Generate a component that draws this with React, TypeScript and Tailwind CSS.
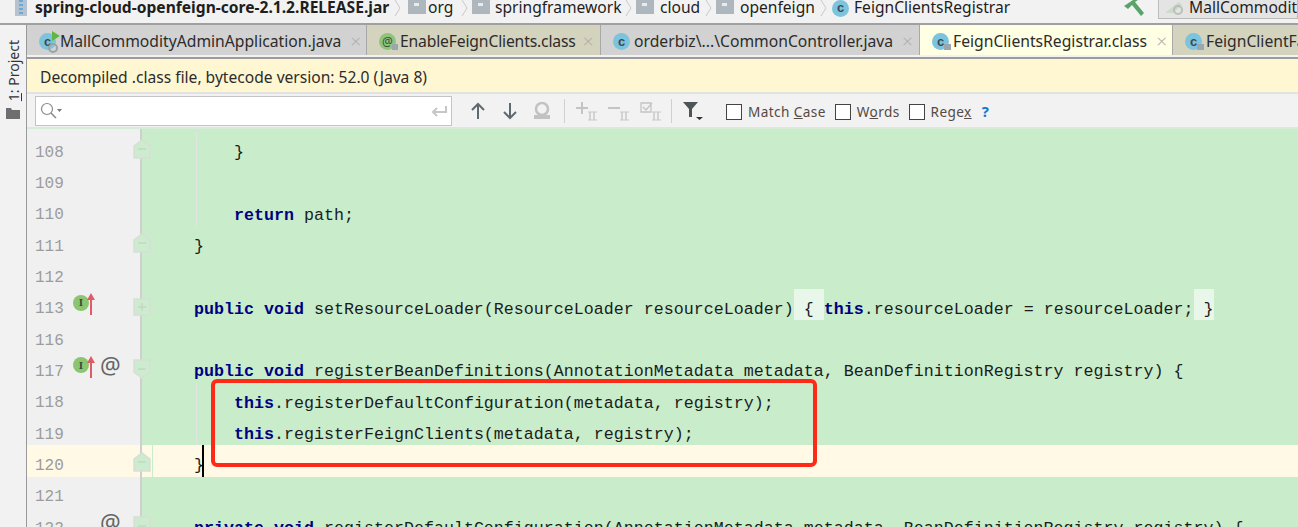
import type { ReactNode } from "react";

const UI = "font-['Noto_Sans','Open_Sans',sans-serif]";

function Chevron() {
  return (
    <svg width="7" height="18" viewBox="0 0 7 18" className="shrink-0">
      <path d="M1 1l5 8-5 8" fill="none" stroke="#c8c8c8" strokeWidth="1" />
    </svg>
  );
}

function FolderIcon() {
  return (
    <svg width="18" height="14" viewBox="0 0 18 14" className="shrink-0 -mt-[3px]">
      <path d="M0 0h18v14H0z" fill="#aeb7bd" />
      <path d="M6 3h5v3H6z" fill="#e8eaec" />
    </svg>
  );
}

function ClassIcon({ lock, run }: { lock?: boolean; run?: boolean }) {
  return (
    <span className="relative inline-flex w-[17px] h-[17px] shrink-0 items-center justify-center rounded-full bg-[#7cc4de]">
      <span className="text-[13px] leading-none font-bold text-[#3a4a52] font-['Liberation_Sans',sans-serif] -mt-[1px]">c</span>
      {lock && <span className="absolute -right-[2px] bottom-0 w-[7px] h-[6px] bg-[#9aa7ae]" />}
      {run && (
        <svg width="24" height="24" viewBox="0 0 24 24" className="absolute left-0 top-[-3px]">
          <path d="M13 1l8 5-8 5z" fill="#62b543" />
          <circle cx="14" cy="18" r="4" fill="none" stroke="#9aa2a8" strokeWidth="2" />
        </svg>
      )}
    </span>
  );
}

function AtIcon() {
  return (
    <span className="relative inline-flex w-[17px] h-[17px] shrink-0 items-center justify-center rounded-full bg-[#8fc47d] text-[12px] leading-none text-[#33503a]">
      @
      <span className="absolute -right-[2px] bottom-0 w-[6px] h-[6px] bg-[#9aa7ae]" />
    </span>
  );
}

function Tab({ icon, label, width, bg, tight, x = true }: { icon: ReactNode; label: string; width: string; bg: string; tight?: boolean; x?: boolean }) {
  return (
    <div className={`${width} ${bg} h-[30px] pt-[3px] shrink-0 flex items-center gap-[4px] pl-[12px] border-r border-[#a8a8a8] overflow-hidden`}>
      {icon}
      <span className={`text-[15.7px] leading-none text-[#2c2c2c] whitespace-nowrap ${tight ? "tracking-[-0.16px]" : ""}`}>{label}</span>
      {x && <span className={`${tight ? "ml-[3px]" : "ml-[5px]"} text-[#b0b0b0] text-[19px] leading-none font-light`}>×</span>}
    </div>
  );
}

function Check({ label }: { label: ReactNode }) {
  return (
    <div className="flex items-center gap-[6px] shrink-0">
      <span className="w-[16px] h-[16px] bg-white border border-[#444]" />
      <span className="text-[13.6px] tracking-[0.4px] text-[#554a44] leading-none">{label}</span>
    </div>
  );
}

function Fold({ kind }: { kind: "up" | "down" | "plus" }) {
  const shape =
    kind === "up"
      ? "M1 7L9 1l8 6v12H1z"
      : kind === "down"
        ? "M1 1h16v12l-8 6-8-6z"
        : "M1 2h16v16H1z";
  return (
    <svg width="18" height="20" viewBox="0 0 18 20" className={`absolute z-10 left-[106px] ${kind === "up" ? "top-[7px]" : "top-[8px]"}`}>
      <path d={shape} fill="#cdebce" stroke="#d6dfd6" strokeWidth="1.5" />
      <path d="M5 10h8" stroke="#bcd2bc" strokeWidth="1" />
      {kind === "plus" && <path d="M9 6v8" stroke="#bcd2bc" strokeWidth="1" />}
    </svg>
  );
}

function Impl() {
  return (
    <span className="flex items-center w-[26px] shrink-0">
      <span className="w-[16px] h-[16px] shrink-0 rounded-full bg-[#8cc572] flex items-center justify-center text-[11px] leading-none font-bold text-[#3b4a3a] font-['Liberation_Serif',serif] -mt-[3px]">
        I
      </span>
      <svg width="10" height="24" viewBox="0 0 10 24" className="-ml-[3px] shrink-0">
        <path d="M5 1L9 8H6v15H4V8H1z" fill="#de5c66" />
      </svg>
    </span>
  );
}

const K = ({ children }: { children: ReactNode }) => <span className="font-bold text-[#000080]">{children}</span>;
const Hl = ({ children }: { children: ReactNode }) => (
  <span className="bg-[#e9f7ea] pt-[11px] pb-[1px]">{children}</span>
);

type Line = {
  n: number;
  code?: ReactNode;
  fold?: "up" | "down" | "plus";
  impl?: boolean;
  at?: boolean;
  active?: boolean;
  guide?: boolean;
};

const lines: Line[] = [
  { n: 108, code: "    }", fold: "up", guide: true },
  { n: 109, guide: true },
  { n: 110, code: <>{"    "}<K>return</K> path;</>, guide: true },
  { n: 111, code: "}", fold: "up" },
  { n: 112 },
  {
    n: 113,
    impl: true,
    fold: "plus",
    code: (
      <>
        <K>public void</K> setResourceLoader(ResourceLoader resourceLoader)<Hl>{" { "}</Hl>
        <K>this</K>.resourceLoader = resourceLoader;<Hl>{" }"}</Hl>
      </>
    ),
  },
  { n: 116 },
  {
    n: 117,
    impl: true,
    at: true,
    fold: "down",
    code: <><K>public void</K> registerBeanDefinitions(AnnotationMetadata metadata, BeanDefinitionRegistry registry) {"{"}</>,
  },
  { n: 118, guide: true, code: <>{"    "}<K>this</K>.registerDefaultConfiguration(metadata, registry);</> },
  { n: 119, guide: true, code: <>{"    "}<K>this</K>.registerFeignClients(metadata, registry);</> },
  { n: 120, active: true, fold: "up", code: "}" },
  { n: 121 },
  {
    n: 122,
    at: true,
    fold: "down",
    code: <><K>private void</K> registerDefaultConfiguration(AnnotationMetadata metadata, BeanDefinitionRegistry registry) {"{"}</>,
  },
];

function Row({ line }: { line: Line }) {
  return (
    <div className="relative flex h-[31.33px] shrink-0">
      <div className={`w-[115px] shrink-0 flex items-center border-r-2 border-[#cfcfcf] ${line.active ? "bg-[#fff9e5]" : "bg-[#f0f0f0]"}`}>
        <span className="w-[46px] pl-[8px] shrink-0 pt-[10px] text-[16px] text-[#9c9c9c]">{line.n}</span>
        {line.impl ? <Impl /> : <span className="w-[26px] shrink-0" />}
        {line.at && <span className={`${UI} ml-[1px] -mt-[2px] text-[23px] leading-none text-[#666]`}>@</span>}
      </div>
      {line.fold && <Fold kind={line.fold} />}
      <div className={`flex-1 relative pl-[52px] whitespace-pre leading-[31px] pt-[5px] text-[#1c1c1c] ${line.active ? "bg-[#fff9e5]" : "bg-[#c9edcb]"}`}>
        {line.active && <span className="absolute left-[10px] top-0 h-full w-px bg-[#c9edcb]" />}
        {line.guide && <span className="absolute left-[54px] top-0 h-full w-px bg-[#e3e3e3]" />}
        <span className="relative">{line.code}</span>
        {line.active && <span className="absolute left-[60px] top-0 h-full w-[2px] bg-black" />}
      </div>
    </div>
  );
}

export default function App() {
  return (
    <div className={`${UI} w-[1298px] h-[527px] overflow-hidden flex flex-col bg-[#f2f2f2]`}>
      {/* breadcrumb */}
      <div className="h-[25px] shrink-0 flex items-center pb-[7px] border-b-2 border-[#a0a0a0] text-[15.6px] leading-none text-[#1e1e1e] whitespace-nowrap overflow-hidden">
        <svg width="12" height="16" viewBox="0 0 12 16" className="ml-[15px] mr-[8px] shrink-0">
          <path d="M0 0h12v16H0z" fill="#b4c3cf" />
          <path d="M4 0h4v2H4zM4 4h4v2H4zM4 8h4v2H4zM4 12h4v2H4z" fill="#6ba8d6" />
        </svg>
        <span className="font-bold w-[359px] shrink-0">spring-cloud-openfeign-core-2.1.2.RELEASE.jar</span>
        <Chevron />
        <span className="w-[7px] shrink-0" />
        <FolderIcon />
        <span className="w-[2px] shrink-0" />
        <span className="w-[33px] shrink-0">org</span>
        <Chevron />
        <span className="w-[4px] shrink-0" />
        <FolderIcon />
        <span className="w-[5px] shrink-0" />
        <span className="w-[130px] shrink-0">springframework</span>
        <Chevron />
        <span className="w-[4px] shrink-0" />
        <FolderIcon />
        <span className="w-[6px] shrink-0" />
        <span className="w-[45px] shrink-0">cloud</span>
        <Chevron />
        <span className="w-[4px] shrink-0" />
        <FolderIcon />
        <span className="w-[6px] shrink-0" />
        <span className="w-[80px] shrink-0">openfeign</span>
        <Chevron />
        <span className="w-[5px] shrink-0" />
        <ClassIcon />
        <span className="w-[5px] shrink-0" />
        <span className="w-[270px] shrink-0">FeignClientsRegistrar</span>
        <svg width="22" height="16" viewBox="0 0 22 16" className="shrink-0">
          <path d="M0 6L9 0h5l-3 2 9 11-3 3-9-11-4 4z" fill="#5aa469" />
        </svg>
        <span className="w-[12px] shrink-0" />
        <div className="h-[21px] min-w-0 flex-1 flex items-center border border-[#bbb] border-t-0 bg-[#e4e4e4] pl-[6px] gap-[6px] overflow-hidden">
          <svg width="18" height="14" viewBox="0 0 18 14" className="shrink-0">
            <path d="M0 12L14 1l3 3-9 8z" fill="#c8dcc8" />
            <circle cx="13" cy="9" r="4" fill="none" stroke="#b8c0b8" strokeWidth="2" />
          </svg>
          <span>MallCommodityAdminApplication</span>
        </div>
      </div>

      <div className="flex-1 flex min-h-0">
        {/* left tool strip */}
        <div className="w-[27px] shrink-0 border-r border-[#999] flex flex-col items-center pt-[15px] gap-[7px]">
          <span className="[writing-mode:vertical-rl] rotate-180 text-[14px] leading-none text-[#333] translate-x-[1px]">
            <span className="underline">1</span>: Project
          </span>
          <svg width="14" height="11" viewBox="0 0 14 11">
            <path d="M0 0h5l1 2h8v9H0z" fill="#6e6e6e" />
          </svg>
        </div>

        <div className="flex-1 min-w-0 flex flex-col">
          {/* tabs */}
          <div className="h-[34px] shrink-0 flex border-b-2 border-[#9c9c9c] overflow-hidden">
            <Tab width="w-[340px]" bg="bg-[#d2d2d2]" label="MallCommodityAdminApplication.java" icon={<ClassIcon run />} />
            <Tab width="w-[234px]" bg="bg-[#d4d3bd]" tight label="EnableFeignClients.class" icon={<AtIcon />} />
            <Tab width="w-[319px]" bg="bg-[#d2d2d2]" label="orderbiz\...\CommonController.java" icon={<ClassIcon />} />
            <Tab width="w-[253px]" bg="bg-[#ffffe4]" label="FeignClientsRegistrar.class" icon={<ClassIcon lock />} />
            <Tab width="w-[200px]" bg="bg-[#d4d3bd]" label="FeignClientFactoryBean.class" icon={<ClassIcon lock />} x={false} />
          </div>

          {/* decompiled banner */}
          <div className="h-[35px] shrink-0 flex items-center pl-[13px] pt-[4px] bg-[#fff6d2] border-b-2 border-[#e2e2e2] text-[15.6px] leading-none text-[#2c2c2c]">
            Decompiled .class file, bytecode version: 52.0 (Java 8)
          </div>

          {/* search bar */}
          <div className="h-[33px] shrink-0 flex items-center">
            <div className="ml-[8px] w-[417px] h-[30px] bg-white border border-[#c4c4c4] flex items-center justify-between px-[4px]">
              <svg width="24" height="18" viewBox="0 0 24 18">
                <circle cx="7" cy="7" r="5.5" fill="none" stroke="#8a8a8a" strokeWidth="1.2" />
                <path d="M11 11l5 5" stroke="#8a8a8a" strokeWidth="1.5" />
                <path d="M17 7h5l-2.5 3z" fill="#777" />
              </svg>
              <svg width="16" height="12" viewBox="0 0 16 12">
                <path d="M15 1v6H3M6 3L2 7l4 4" fill="none" stroke="#c6c6c6" strokeWidth="2" />
              </svg>
            </div>
            <svg width="16" height="18" viewBox="0 0 16 18" className="ml-[18px] shrink-0">
              <path d="M8 2v15M2 8l6-6 6 6" fill="none" stroke="#5f6a70" strokeWidth="2" />
            </svg>
            <svg width="16" height="18" viewBox="0 0 16 18" className="ml-[16px] shrink-0">
              <path d="M8 1v15M2 10l6 6 6-6" fill="none" stroke="#5f6a70" strokeWidth="2" />
            </svg>
            <svg width="20" height="20" viewBox="0 0 20 20" className="ml-[14px] shrink-0">
              <circle cx="10" cy="8" r="6" fill="none" stroke="#c2c2c2" strokeWidth="2.5" />
              <path d="M2 18h16v-4H2z" fill="#c2c2c2" />
            </svg>
            <span className="ml-[12px] w-px h-[24px] bg-[#d0d0d0]" />
            {[0, 1, 2].map((i) => (
              <svg key={i} width="22" height="20" viewBox="0 0 22 20" className={`shrink-0 ${i === 0 ? "ml-[11px]" : "ml-[10px]"}`}>
                {i === 0 && <path d="M6 1v12M0 7h12" stroke="#c4c4c4" strokeWidth="2" />}
                {i === 1 && <path d="M0 7h12" stroke="#c4c4c4" strokeWidth="2" />}
                {i === 2 && <path d="M1 2h10v9H1zM3 6l3 3 6-7" fill="none" stroke="#c4c4c4" strokeWidth="1.3" />}
                <path d="M14 11v8M18 11v8" stroke="#c9c9c9" strokeWidth="1.5" />
                <path d="M12 11h9M12 19h9" stroke="#c9c9c9" strokeWidth="1" />
              </svg>
            ))}
            <span className="ml-[9px] w-px h-[24px] bg-[#d0d0d0]" />
            <svg width="20" height="20" viewBox="0 0 20 20" className="ml-[11px] shrink-0">
              <path d="M0 1h15L9 8v8H6V8z" fill="#4e5558" />
              <path d="M13 16h7l-3.500 3z" fill="#333" />
            </svg>
            <div className="ml-[23px] pt-[2px] flex items-center gap-[9px]">
              <Check label={<>Match <span className="underline">C</span>ase</>} />
              <Check label={<>W<span className="underline">o</span>rds</>} />
              <Check label={<>Rege<span className="underline">x</span></>} />
              <span className="ml-[1px] text-[15px] leading-none font-bold text-[#1878c8]">?</span>
            </div>
          </div>

          {/* editor */}
          <div className="relative flex-1 min-h-0 overflow-hidden flex flex-col font-['Liberation_Mono',monospace] text-[16.67px]">
            <div className="relative h-[5px] shrink-0 flex border-t-2 border-[#d6ecd8]">
              <div className="w-[115px] bg-[#f0f0f0] border-r-2 border-[#cfcfcf]" />
              <div className="flex-1 bg-[#c9edcb]" />
            </div>
            {lines.map((line) => (
              <Row key={line.n} line={line} />
            ))}
            <div className="absolute left-[184px] top-[252px] w-[606px] h-[88px] border-[4px] border-[#fe2a18] rounded-[6px]" />
          </div>
        </div>
      </div>
    </div>
  );
}
